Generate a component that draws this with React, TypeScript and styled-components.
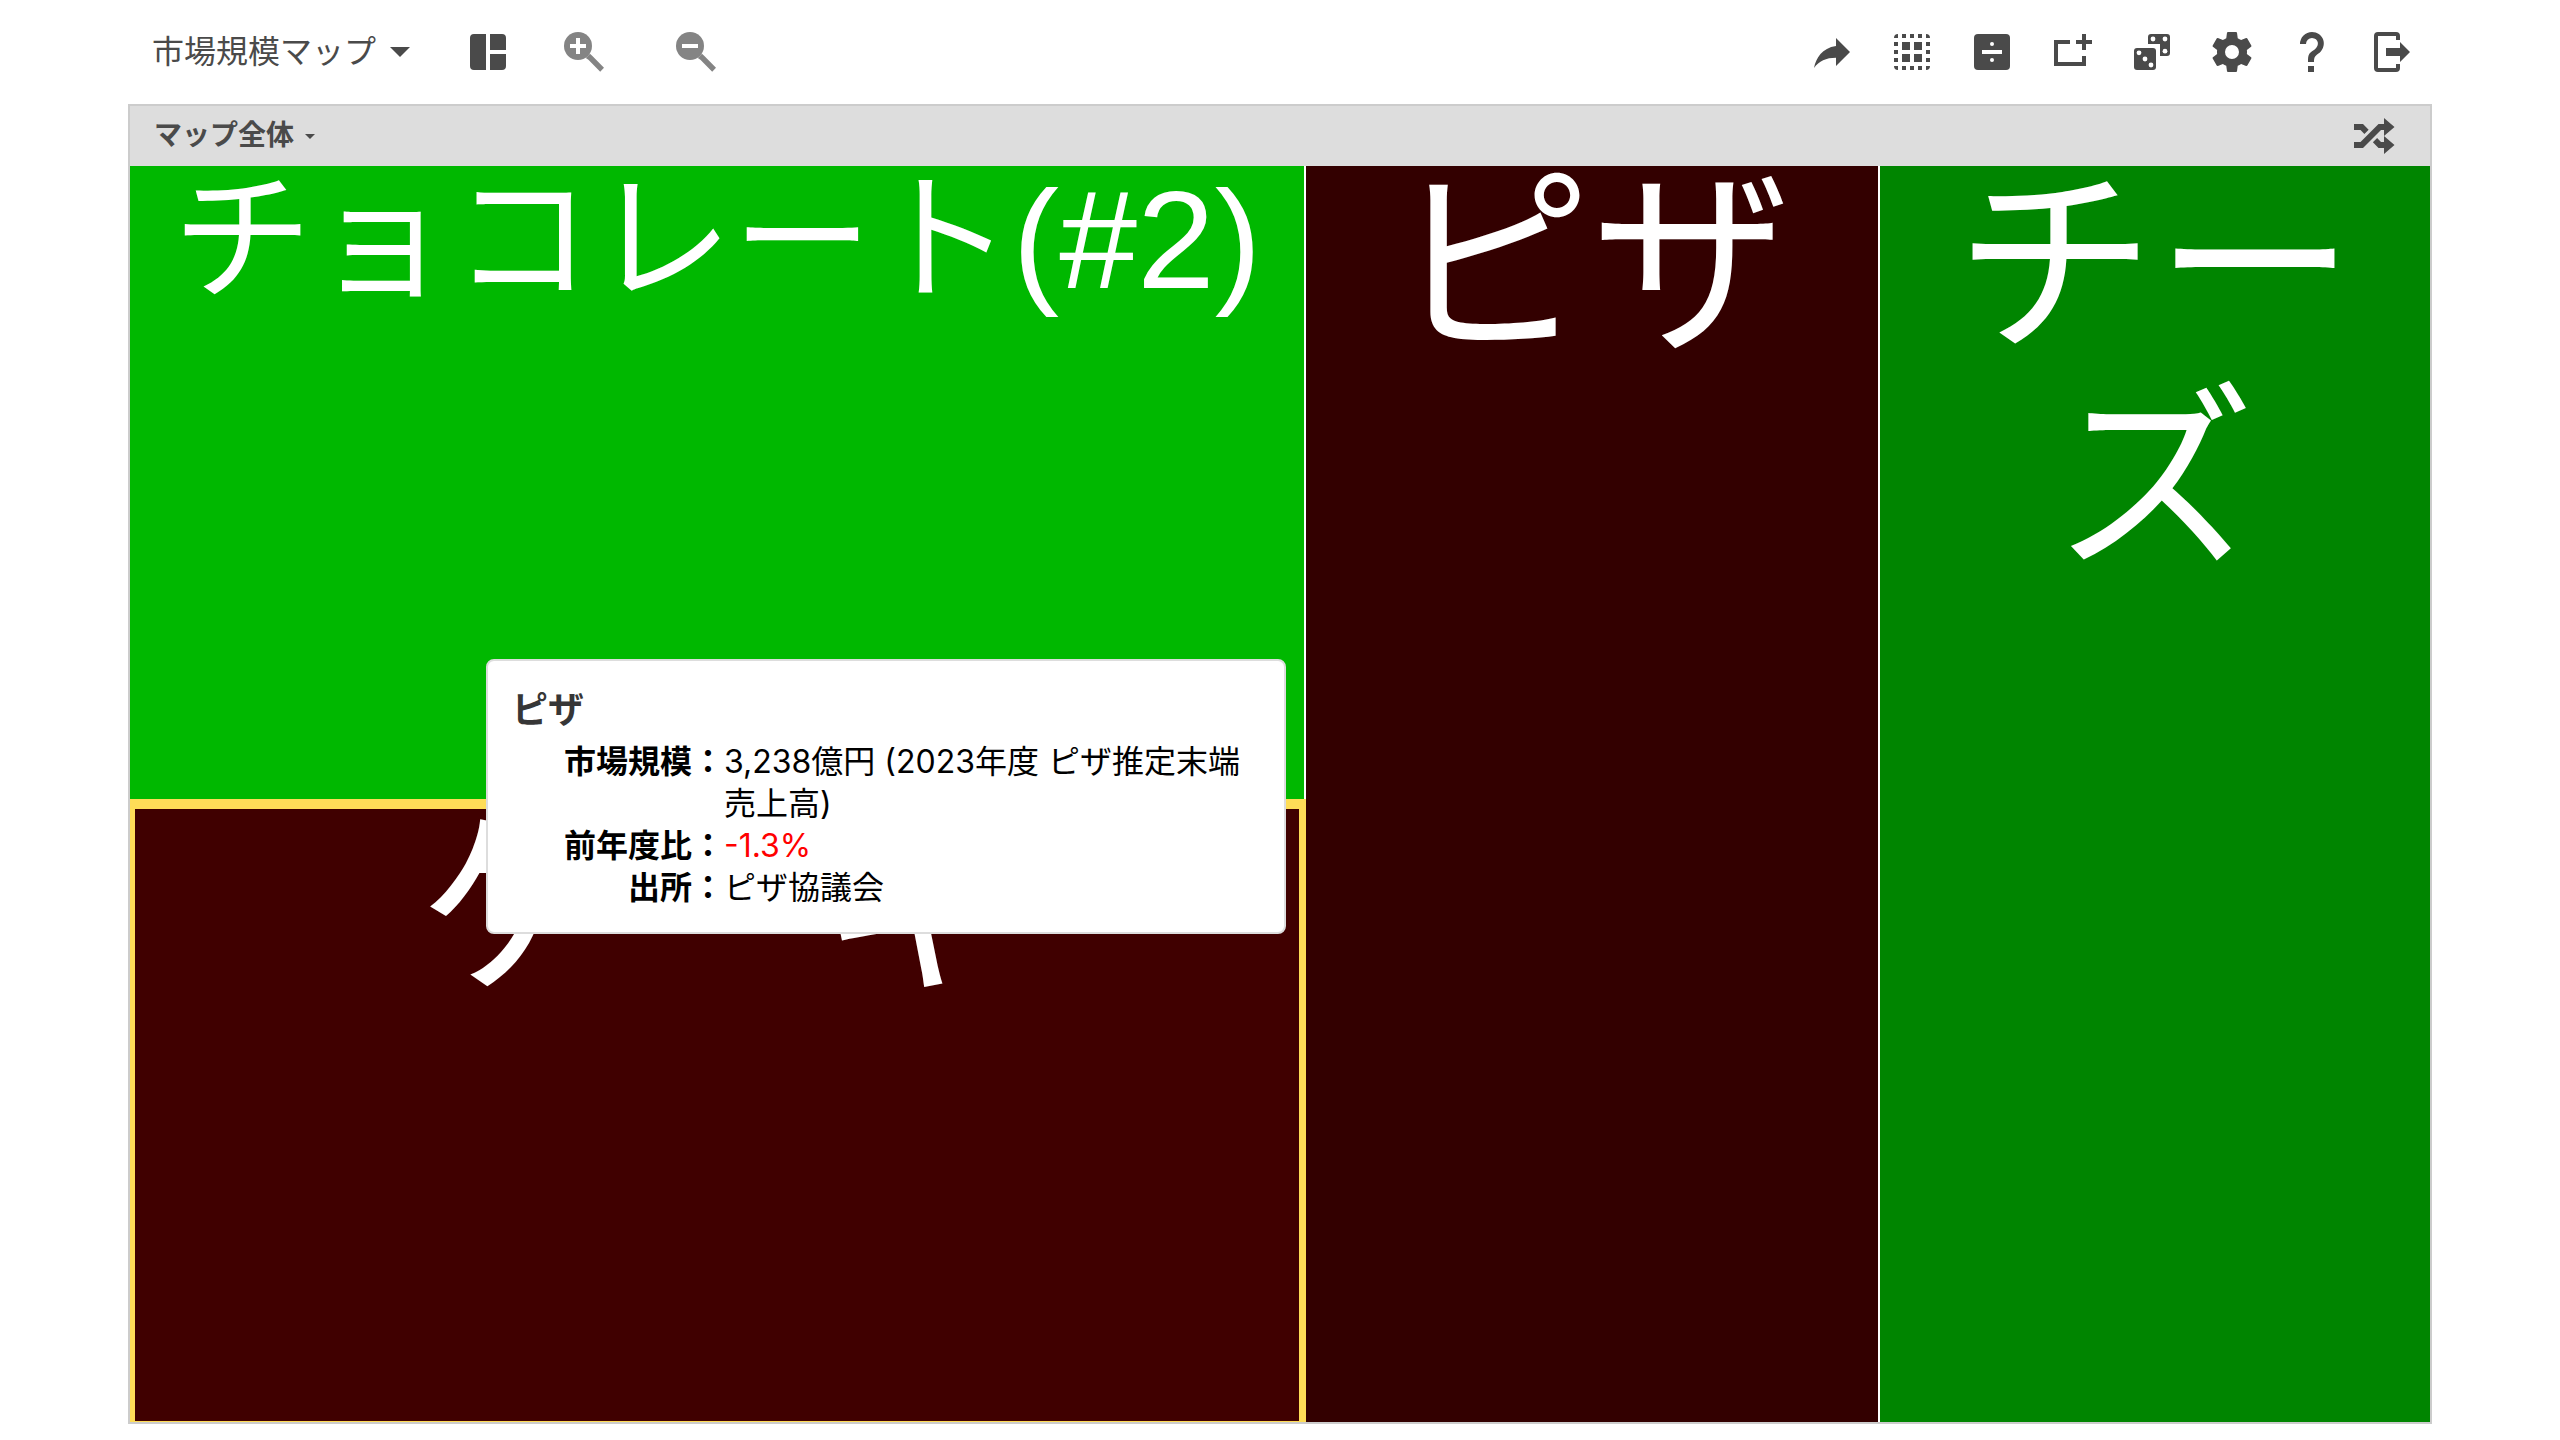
import React from "react";
import styled, { createGlobalStyle } from "styled-components";

const GlobalStyle = createGlobalStyle`
  * { box-sizing: border-box; }
  body {
    margin: 0;
    background: #fff;
    color: #000;
    font-family: Inter, "Noto Sans CJK JP", sans-serif;
  }
  button {
    padding: 0;
    border: 0;
    background: none;
    color: inherit;
    font: inherit;
    cursor: pointer;
  }
`;

const Page = styled.div`
  display: flex;
  flex-direction: column;
  min-height: 100vh;
  padding: 0 5% 16px;
`;

const Toolbar = styled.header`
  display: flex;
  align-items: center;
  justify-content: space-between;
  height: 104px;
  padding: 0 16px 0 24px;
  color: #4a4a4a;
`;

const ToolGroup = styled.div<{ $gap: number }>`
  display: flex;
  align-items: center;
  gap: ${(p) => p.$gap}px;
`;

const MenuButton = styled.button<{ $gap: number }>`
  display: flex;
  align-items: center;
  gap: ${(p) => p.$gap}px;
  white-space: nowrap;
`;

const MenuTitle = styled.span`
  font-size: 32px;
  line-height: 48px;
`;

const Caret = styled.span<{ $size: number }>`
  border-top: ${(p) => p.$size}px solid currentColor;
  border-left: ${(p) => p.$size}px solid transparent;
  border-right: ${(p) => p.$size}px solid transparent;
`;

const ViewTools = styled(ToolGroup)`
  margin-right: auto;
  padding-left: 54px;
`;

const IconButton = styled.button<{ $muted?: boolean }>`
  display: flex;
  width: 48px;
  height: 48px;
  color: ${(p) => (p.$muted ? "#848484" : "#4a4a4a")};

  svg {
    width: 100%;
    height: 100%;
    fill: currentColor;
  }
`;

const Frame = styled.main`
  display: flex;
  flex: 1;
  flex-direction: column;
  border: 2px solid #ccc;
`;

const FrameHeader = styled.div`
  display: flex;
  align-items: center;
  justify-content: space-between;
  height: 60px;
  padding: 0 32px 0 24px;
  background: #ddd;
  color: #4a4a4a;
`;

const FrameTitle = styled.span`
  padding-bottom: 2px;
  font-size: 28px;
  font-weight: 700;
  line-height: 40px;
`;

const Treemap = styled.div`
  position: relative;
  display: grid;
  flex: 1;
  grid-template-columns: minmax(0, 1176fr) minmax(0, 574fr) minmax(0, 550fr);
`;

const Column = styled.div<{ $rows?: string }>`
  display: grid;
  grid-template-rows: ${(p) => p.$rows ?? "minmax(0, 1fr)"};
`;

const Tile = styled.div<{ $color: string; $edge?: boolean; $selected?: boolean }>`
  overflow: hidden;
  border-style: solid;
  border-color: ${(p) => (p.$selected ? "#ffdd57" : "#fff")};
  border-width: ${(p) => (p.$selected ? "10px 7px 1px 5px" : p.$edge ? "0" : "0 2px 0 0")};
  background: ${(p) => p.$color};
`;

const TileName = styled.div<{ $small?: boolean }>`
  margin-top: -8px;
  color: #fff;
  font-family: "Liberation Sans", "Noto Sans CJK JP", sans-serif;
  font-size: ${(p) => (p.$small ? 140 : 200)}px;
  line-height: ${(p) => (p.$small ? 164 : 216)}px;
  text-align: center;
  word-break: break-all;
`;

const Tooltip = styled.section`
  position: absolute;
  top: 493px;
  left: 356px;
  width: 800px;
  padding: 24px 26px 23px 24px;
  border: 2px solid #ddd;
  border-radius: 8px;
  background: #fff;
`;

const TooltipTitle = styled.h2`
  margin: 0 0 6px;
  color: #363636;
  font-size: 36px;
  font-weight: 700;
  line-height: 50px;
`;

const Facts = styled.dl`
  display: grid;
  grid-template-columns: 212px 1fr;
  margin: 0;
  font-size: 32px;
  line-height: 42px;
`;

const FactName = styled.dt`
  font-weight: 700;
  text-align: right;
`;

const FactValue = styled.dd<{ $negative?: boolean }>`
  margin: 0;
  color: ${(p) => (p.$negative ? "#f00" : "#000")};
`;

type Glyph = { label: string; art: React.ReactNode };

const dots = [7, 11, 15];

const viewIcon: Glyph = {
  label: "表示",
  art: <path d="M5 3h6v18H5a2 2 0 0 1-2-2V5a2 2 0 0 1 2-2zM13 3h6a2 2 0 0 1 2 2v6h-8zM13 13h8v6a2 2 0 0 1-2 2h-6z" />,
};

const magnifier = (
  <>
    <circle cx="9" cy="9" r="7" />
    <path d="M12.9 15 15 12.9 16.2 14 22 19.9 20.1 21.9 14.2 15.9z" />
  </>
);

const zoomIcons: Glyph[] = [
  { label: "拡大", art: <>{magnifier}<path fill="#fff" d="M8 5h2v3h3v2h-3v3H8v-3H5V8h3z" /></> },
  { label: "縮小", art: <>{magnifier}<path fill="#fff" d="M5 8h8v2H5z" /></> },
];

const actionIcons: Glyph[] = [
  { label: "共有", art: <path d="M21 12l-7-7v4C7 10 4 15 3 20c2.5-3.5 6-5.1 11-5.1V19l7-7z" /> },
  {
    label: "すべて選択",
    art: (
      <>
        {dots.map((n) => (
          <path key={n} d={`M${n} 3h2v2h-2zM${n} 19h2v2h-2zM3 ${n}h2v2H3zM19 ${n}h2v2h-2z`} />
        ))}
        <path d="M5 3v2H3a2 2 0 0 1 2-2zM19 3a2 2 0 0 1 2 2h-2zM3 19h2v2a2 2 0 0 1-2-2zM19 19h2a2 2 0 0 1-2 2z" />
        <path d="M7 7h4v4H7zM13 7h4v4h-4zM7 13h4v4H7zM13 13h4v4h-4z" />
      </>
    ),
  },
  {
    label: "割り算",
    art: (
      <>
        <rect x="3" y="3" width="18" height="18" rx="2" />
        <path fill="#fff" d="M7 11h10v2H7z" />
        <circle fill="#fff" cx="12" cy="8" r="1" />
        <circle fill="#fff" cx="12" cy="16" r="1" />
      </>
    ),
  },
  { label: "追加", art: <path d="M3 6h8v2H5v9h12v-3h2v5H3zM17 3h2v3h3v2h-3v3h-2V8h-3V6h3z" /> },
  {
    label: "ランダム",
    art: (
      <>
        <rect x="3" y="10" width="11" height="11" rx="1.5" />
        <path d="M11.5 3h8A1.5 1.5 0 0 1 21 4.5v8a1.5 1.5 0 0 1-1.5 1.5H16V8h-6V4.5A1.5 1.5 0 0 1 11.5 3z" />
        {[[5.5, 12.4], [8.5, 15.5], [11.5, 18.5], [12.5, 5.5], [18.5, 5.5], [18.5, 11.6]].map(([x, y]) => (
          <circle key={`${x}-${y}`} fill="#fff" cx={x} cy={y} r="1.2" />
        ))}
      </>
    ),
  },
  {
    label: "設定",
    art: (
      <path d="M12 15.5A3.5 3.5 0 0 1 8.5 12 3.5 3.5 0 0 1 12 8.5a3.5 3.5 0 0 1 3.5 3.5 3.5 3.5 0 0 1-3.5 3.5m7.43-2.53c.04-.32.07-.64.07-.97 0-.33-.03-.66-.07-1l2.11-1.63c.19-.15.24-.42.12-.64l-2-3.46c-.12-.22-.39-.31-.61-.22l-2.49 1c-.52-.39-1.06-.73-1.69-.98l-.37-2.65A.506.506 0 0 0 14 2h-4c-.25 0-.46.18-.5.42l-.37 2.65c-.63.25-1.17.59-1.69.98l-2.49-1c-.22-.09-.49 0-.61.22l-2 3.46c-.13.22-.07.49.12.64L4.57 11c-.04.34-.07.67-.07 1 0 .33.03.65.07.97l-2.11 1.66c-.19.15-.25.42-.12.64l2 3.46c.12.22.39.3.61.22l2.49-1.01c.52.4 1.06.74 1.69.99l.37 2.65c.04.24.25.42.5.42h4c.25 0 .46-.18.5-.42l.37-2.65c.63-.26 1.17-.59 1.69-.99l2.49 1.01c.22.08.49 0 .61-.22l2-3.46c.12-.22.07-.49-.12-.64l-2.11-1.66z" />
    ),
  },
  {
    label: "ヘルプ",
    art: (
      <path d="M10 19h3v3h-3v-3m2-17c5.35.22 7.68 5.62 4.5 9.67-.83 1-2.17 1.66-2.83 2.5C13 15 13 16 13 17h-3c0-1.67 0-3.08.67-4.08.66-1 2-1.59 2.83-2.25C15.92 8.43 15.32 5.26 12 5a3 3 0 0 0-3 3H6a6 6 0 0 1 6-6z" />
    ),
  },
  {
    label: "終了",
    art: (
      <path d="M16 17v-3H9v-4h7V7l5 5-5 5M14 2a2 2 0 0 1 2 2v2h-2V4H5v16h9v-2h2v2a2 2 0 0 1-2 2H5a2 2 0 0 1-2-2V4a2 2 0 0 1 2-2h9z" />
    ),
  },
];

const shuffleIcon: Glyph = {
  label: "シャッフル",
  art: (
    <path d="M17 3l5.25 4.5L17 12l5.25 4.5L17 21v-3h-2.74l-2.82-2.82 2.12-2.12L15.5 15H17V9h-1.5l-9 9H2v-3h3.26l9-9H17V3M2 6h4.5l2.82 2.82-2.12 2.12L5.26 9H2V6z" />
  ),
};

function Tool({ glyph, muted }: { glyph: Glyph; muted?: boolean }) {
  return (
    <IconButton type="button" aria-label={glyph.label} $muted={muted}>
      <svg viewBox="0 0 24 24" aria-hidden="true">
        {glyph.art}
      </svg>
    </IconButton>
  );
}

const facts = [
  { name: "市場規模", value: "3,238億円 (2023年度 ピザ推定末端売上高)" },
  { name: "前年度比", value: "-1.3%", negative: true },
  { name: "出所", value: "ピザ協議会" },
];

export default function App() {
  return (
    <Page lang="ja">
      <GlobalStyle />
      <Toolbar>
        <MenuButton type="button" $gap={14}>
          <MenuTitle>市場規模マップ</MenuTitle>
          <Caret $size={10} />
        </MenuButton>
        <ViewTools $gap={48}>
          <Tool glyph={viewIcon} />
          <ToolGroup $gap={64}>
            {zoomIcons.map((g) => (
              <Tool key={g.label} glyph={g} muted />
            ))}
          </ToolGroup>
        </ViewTools>
        <ToolGroup $gap={32}>
          {actionIcons.map((g) => (
            <Tool key={g.label} glyph={g} />
          ))}
        </ToolGroup>
      </Toolbar>
      <Frame>
        <FrameHeader>
          <MenuButton type="button" $gap={11}>
            <FrameTitle>マップ全体</FrameTitle>
            <Caret $size={5} />
          </MenuButton>
          <Tool glyph={shuffleIcon} />
        </FrameHeader>
        <Treemap>
          <Column $rows="minmax(0, 633fr) minmax(0, 623fr)">
            <Tile $color="#00b800">
              <TileName $small>チョコレート(#2)</TileName>
            </Tile>
            <Tile $color="#400000" $selected>
              <TileName>ケーキ</TileName>
            </Tile>
          </Column>
          <Column>
            <Tile $color="#330000">
              <TileName>ピザ</TileName>
            </Tile>
          </Column>
          <Column>
            <Tile $color="#008500" $edge>
              <TileName>チーズ</TileName>
            </Tile>
          </Column>
          <Tooltip role="tooltip">
            <TooltipTitle>ピザ</TooltipTitle>
            <Facts>
              {facts.map((f) => (
                <React.Fragment key={f.name}>
                  <FactName>{f.name}：</FactName>
                  <FactValue $negative={f.negative}>{f.value}</FactValue>
                </React.Fragment>
              ))}
            </Facts>
          </Tooltip>
        </Treemap>
      </Frame>
    </Page>
  );
}
